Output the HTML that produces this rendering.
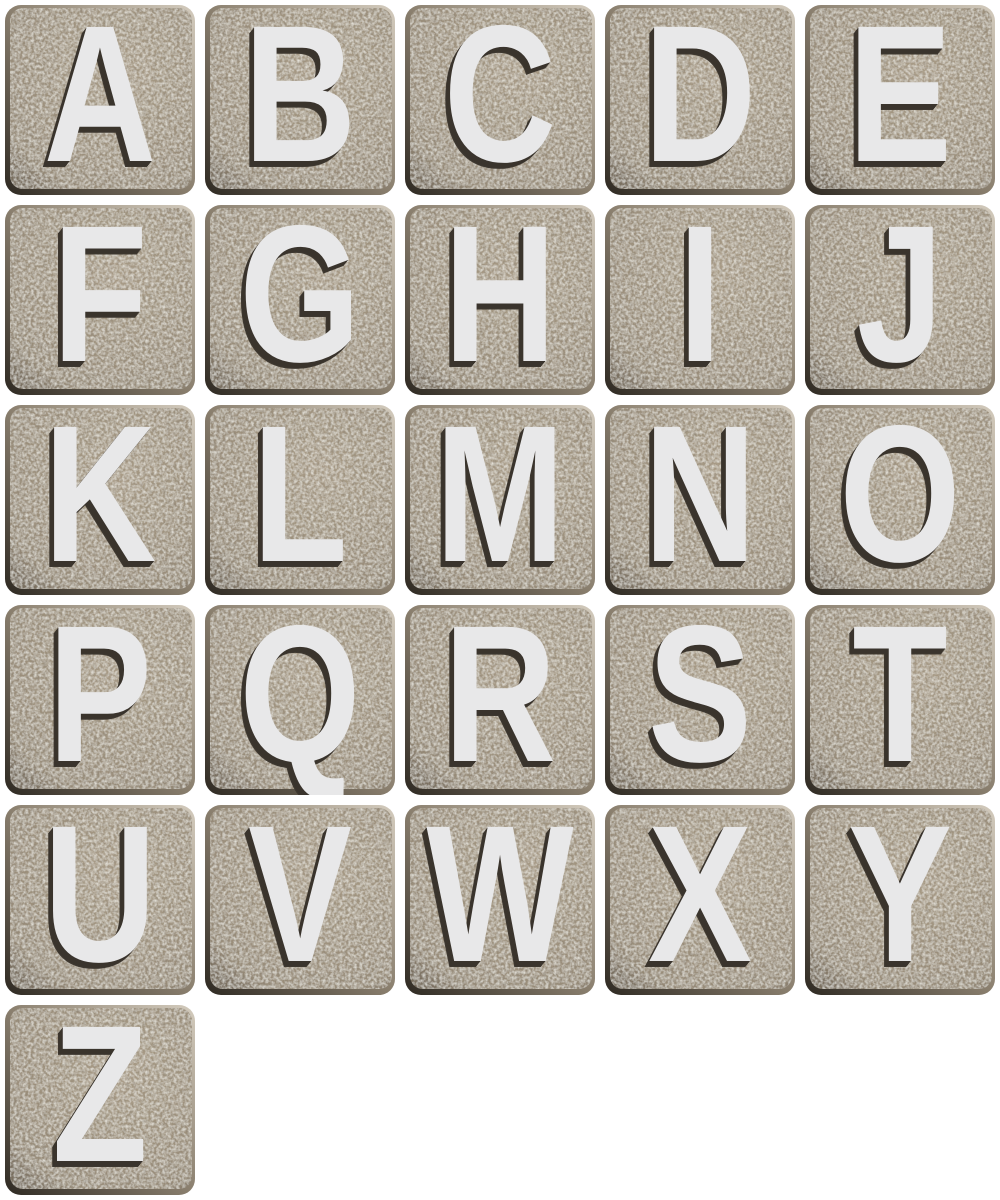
<!DOCTYPE html>
<html><head><meta charset="utf-8"><style>
html,body{margin:0;padding:0;background:#fff;width:1000px;height:1200px;overflow:hidden;position:relative}
svg{position:absolute;left:0;top:0}
.t{position:absolute;width:190px;height:190px;overflow:hidden}
.t span{position:absolute;left:0;width:190px;top:-8px;text-align:center;font:bold 195px/1 "Liberation Sans",sans-serif;color:#e8e8e9;transform:scaleX(0.8);
text-shadow:-1px 1px #3a342d,-2px 2px #3a342d,-3px 3px #3a342d,-4px 4px #3a342d,-5px 5px #3a342d,-6px 6px #3e3830}
</style></head><body>
<svg width="1000" height="1200">
<defs>
<filter id="tex" x="0" y="0" width="100%" height="100%">
<feTurbulence type="fractalNoise" baseFrequency="0.35" numOctaves="2" seed="3" result="n"/>
<feColorMatrix in="n" type="matrix" values="0 0 0 0 1  0 0 0 0 1  0 0 0 0 0.95  0 0 0 -1.1 0.75" result="light"/>
<feComposite in="light" in2="SourceGraphic" operator="in" result="l2"/>
<feTurbulence type="fractalNoise" baseFrequency="0.3" numOctaves="2" seed="9" result="n2"/>
<feColorMatrix in="n2" type="matrix" values="0 0 0 0 0.25  0 0 0 0 0.22  0 0 0 0 0.18  0 0 0 -1.2 0.6" result="dark"/>
<feComposite in="dark" in2="SourceGraphic" operator="in" result="d2"/>
<feMerge><feMergeNode in="SourceGraphic"/><feMergeNode in="l2"/><feMergeNode in="d2"/></feMerge>
</filter>
<radialGradient id="g" cx="0.6" cy="0.35" r="0.8">
<stop offset="0" stop-color="#a89b86"/><stop offset="0.85" stop-color="#988c79"/><stop offset="1" stop-color="#7a6f60"/>
</radialGradient>
<linearGradient id="edge" x1="1" y1="0" x2="0" y2="1">
<stop offset="0" stop-color="#d4ccbe"/><stop offset="0.5" stop-color="#8a7f6e"/><stop offset="1" stop-color="#2e2922"/>
</linearGradient>
</defs>
<g id="tiles"></g>
</svg>
<div id="L"></div>
<script>
var s="ABCDEFGHIJKLMNOPQRSTUVWXYZ",g=document.getElementById("tiles"),L=document.getElementById("L"),ns="http://www.w3.org/2000/svg",h="";
for(var i=0;i<26;i++){var x=5+200*(i%5),y=5+200*Math.floor(i/5);
var r=document.createElementNS(ns,"rect");r.setAttribute("x",x);r.setAttribute("y",y);r.setAttribute("width",190);r.setAttribute("height",190);r.setAttribute("rx",16);r.setAttribute("fill","url(#edge)");g.appendChild(r);
var r2=document.createElementNS(ns,"rect");r2.setAttribute("x",x+5);r2.setAttribute("y",y+3);r2.setAttribute("width",182);r2.setAttribute("height",181);r2.setAttribute("rx",13);r2.setAttribute("fill","url(#g)");r2.setAttribute("filter","url(#tex)");g.appendChild(r2);
h+='<div class="t" style="left:'+x+'px;top:'+y+'px"><span>'+s[i]+'</span></div>';}
L.innerHTML=h;
</script>
</body></html>
